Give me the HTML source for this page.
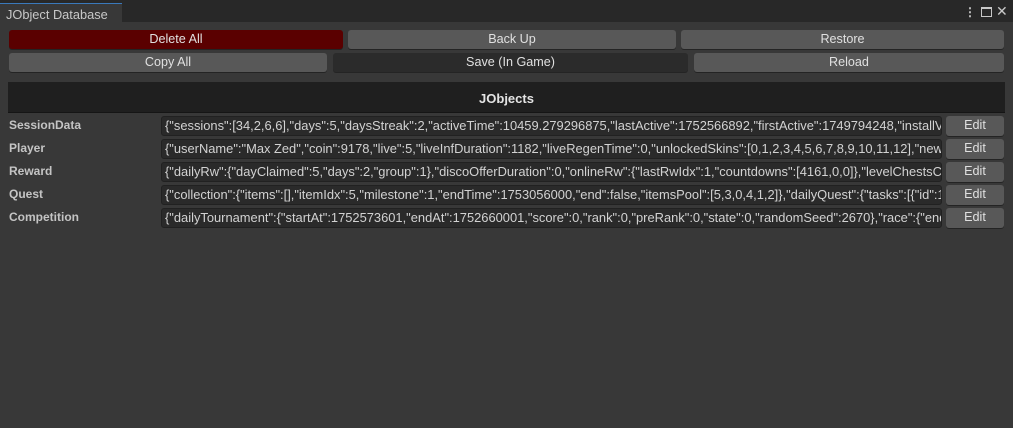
<!DOCTYPE html>
<html><head><meta charset="utf-8"><style>
*{box-sizing:border-box;margin:0;padding:0}
body{width:1013px;height:428px;background:#383838;font-family:"Liberation Sans",sans-serif;font-size:12px;color:#d2d2d2;position:relative;overflow:hidden}
.a{position:absolute}
.top{left:0;top:0;width:1013px;height:22px;background:#282828}
.tab{left:0;top:3px;width:122px;height:20px;background:#383838;border-top:1px solid #3a79bb;color:#c8c8c8;font-size:12.8px;padding:3px 0 0 6px}
.btn{position:absolute;height:19px;background:#585858;border-radius:3px;text-align:center;line-height:19px;color:#e0e0e0;font-size:12.6px;box-shadow:0 1px 0 #242424}
.lbl{position:absolute;left:9px;font-weight:bold;color:#c4c4c4}
.tf{position:absolute;left:161px;width:781px;height:20px;background:#2a2a2a;border:1px solid #212121;border-radius:3px;white-space:nowrap;overflow:hidden;line-height:18px;padding-left:3px;color:#d2d2d2;font-size:12.9px}
</style></head><body>
<div class="a top"></div>
<div class="a tab">JObject Database</div>
<div class="a" style="left:964px;top:5px;color:#c8c8c8;font-size:12px;font-weight:bold">&#8942;</div>
<div class="a" style="left:981px;top:7px;width:11px;height:10px;border:1px solid #c8c8c8;border-top-width:2px"></div>
<div class="a" style="left:996px;top:3px;color:#c8c8c8;font-size:14px">&#10005;</div>
<div class="btn" style="left:9px;top:30px;width:334px;background:#5a0000">Delete All</div>
<div class="btn" style="left:348px;top:30px;width:328px">Back Up</div>
<div class="btn" style="left:681px;top:30px;width:323px">Restore</div>
<div class="btn" style="left:9px;top:53px;width:318px">Copy All</div>
<div class="btn" style="left:333px;top:53px;width:355px;background:#2b2b2b">Save (In Game)</div>
<div class="btn" style="left:694px;top:53px;width:310px">Reload</div>
<div class="a" style="left:8px;top:82px;width:997px;height:31px;background:#1f1f1f;border-bottom:1px solid #151515;text-align:center;line-height:33px;font-weight:bold;font-size:13px;color:#e4e4e4">JObjects</div>
<div class="lbl" style="top:118px">SessionData</div>
<div class="tf" style="top:116px">{"sessions":[34,2,6,6],"days":5,"daysStreak":2,"activeTime":10459.279296875,"lastActive":1752566892,"firstActive":1749794248,"installVersion":"1.0"}</div>
<div class="btn" style="left:946px;top:116px;width:58px;height:20px">Edit</div>
<div class="lbl" style="top:141px">Player</div>
<div class="tf" style="top:139px">{"userName":"Max Zed","coin":9178,"live":5,"liveInfDuration":1182,"liveRegenTime":0,"unlockedSkins":[0,1,2,3,4,5,6,7,8,9,10,11,12],"newFrames":[]}</div>
<div class="btn" style="left:946px;top:139px;width:58px;height:20px">Edit</div>
<div class="lbl" style="top:164px">Reward</div>
<div class="tf" style="top:162px">{"dailyRw":{"dayClaimed":5,"days":2,"group":1},"discoOfferDuration":0,"onlineRw":{"lastRwIdx":1,"countdowns":[4161,0,0]},"levelChestsClaimed":0}</div>
<div class="btn" style="left:946px;top:162px;width:58px;height:20px">Edit</div>
<div class="lbl" style="top:187px">Quest</div>
<div class="tf" style="top:185px">{"collection":{"items":[],"itemIdx":5,"milestone":1,"endTime":1753056000,"end":false,"itemsPool":[5,3,0,4,1,2]},"dailyQuest":{"tasks":[{"id":1,"p":0}]}}</div>
<div class="btn" style="left:946px;top:185px;width:58px;height:20px">Edit</div>
<div class="lbl" style="top:210px">Competition</div>
<div class="tf" style="top:208px">{"dailyTournament":{"startAt":1752573601,"endAt":1752660001,"score":0,"rank":0,"preRank":0,"state":0,"randomSeed":2670},"race":{"endAt":0}}</div>
<div class="btn" style="left:946px;top:208px;width:58px;height:20px">Edit</div>
</body></html>
